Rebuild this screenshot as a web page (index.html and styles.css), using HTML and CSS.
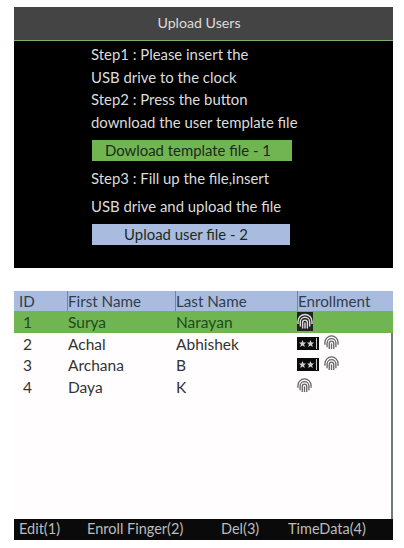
FILE: index.html
```html
<!DOCTYPE html>
<html lang="en">
<head>
  <meta charset="UTF-8">
  <meta name="viewport" content="width=device-width, initial-scale=1.0">
  <title>Upload Users</title>
  <link rel="stylesheet" href="styles.css">
</head>
<body>
  <svg class="defs" width="0" height="0">
    <symbol id="finger" viewBox="0 0 16 16">
      <g fill="none" stroke="currentColor" stroke-width="1.400">
        <path d="M1 10.500V8a7 7 0 0 1 14 0v2.500"/>
        <path d="M3.300 13V8.500a4.700 4.700 0 0 1 9.400 0V13"/>
        <path d="M5.600 15V9a2.400 2.400 0 0 1 4.800 0v6"/>
        <path d="M8 15V9"/>
      </g>
    </symbol>
    <symbol id="pass" viewBox="0 0 22 13">
      <rect width="22" height="13" fill="#0a0a0a"/>
      <path fill="#d0d0d0" d="M5.500 3l1 2.500 2.600.1-2 1.700.7 2.600-2.300-1.500-2.300 1.500.7-2.600-2-1.700 2.600-.1zM13.500 3l1 2.500 2.600.1-2 1.700.7 2.600-2.300-1.500-2.300 1.500.7-2.600-2-1.700 2.600-.1z"/>
      <rect x="19" y="1" width="1" height="11" fill="#d0d0d0"/>
    </symbol>
  </svg>

  <!-- upload screen -->
  <div class="panel upload">
    <div class="title">Upload Users</div>
    <div class="steps">
      <p class="line">Step1 : Please insert the</p>
      <p class="line">USB drive to the clock</p>
      <p class="line">Step2 : Press the button</p>
      <p class="line">download the user template file</p>
      <div class="btn btn-green">Dowload template file - 1</div>
      <p class="line line-wide">Step3 : Fill up the file,insert</p>
      <p class="line line-wide">USB drive and upload the file</p>
      <div class="btn btn-blue">Upload user file - 2</div>
    </div>
  </div>

  <!-- user list -->
  <div class="panel users">
    <div class="row head">
      <span>ID</span>
      <span>First Name</span>
      <span>Last Name</span>
      <span>Enrollment</span>
    </div>
    <div class="list">
      <div class="row selected">
        <span class="num">1</span><span>Surya</span><span>Narayan</span>
        <span class="enroll"><svg class="fp fp-dark"><use href="#finger"/></svg></span>
      </div>
      <div class="row">
        <span class="num">2</span><span>Achal</span><span>Abhishek</span>
        <span class="enroll"><svg class="pw"><use href="#pass"/></svg><svg class="fp"><use href="#finger"/></svg></span>
      </div>
      <div class="row">
        <span class="num">3</span><span>Archana</span><span>B</span>
        <span class="enroll"><svg class="pw"><use href="#pass"/></svg><svg class="fp"><use href="#finger"/></svg></span>
      </div>
      <div class="row">
        <span class="num">4</span><span>Daya</span><span>K</span>
        <span class="enroll"><svg class="fp"><use href="#finger"/></svg></span>
      </div>
    </div>
    <div class="footer">
      <span>Edit(1)</span>
      <span>Enroll Finger(2)</span>
      <span>Del(3)</span>
      <span>TimeData(4)</span>
    </div>
  </div>
</body>
</html>
```
FILE: styles.css
```css
body {
  margin: 0;
  padding: 7px 11px 8px 14px;
  background-color: #fff;
  font-family: Lato, sans-serif;
  font-size: 15.500px;
}
.defs {
  display: block;
  height: 0;
}
.panel {
  width: 379px;
}

/* upload screen */
.upload {
  height: 261px;
  background-color: #000;
  color: #dcdcdc;
  font-size: 14.900px;
}
.title {
  height: 33px;
  line-height: 32px;
  padding-right: 9px;
  text-align: center;
  background-color: #444;
  border-bottom: 1px solid #7fb070;
  font-size: 14.200px;
}
.steps {
  padding: 2px 0 0 77px;
}
.line {
  margin: 0;
  height: 22.700px;
  line-height: 22.700px;
  white-space: nowrap;
}
.line-wide {
  height: 28px;
  line-height: 28px;
}
.btn {
  height: 21px;
  line-height: 20px;
  text-align: center;
  color: #1c2a1c;
  box-sizing: border-box;
}
.btn-green {
  width: 200px;
  margin: 6px 0 3px 1px;
  padding-right: 8px;
  background-color: #71b553;
}
.btn-blue {
  width: 198px;
  margin: 4px 0 0 1px;
  padding-right: 10px;
  background-color: #a9bcdf;
}

/* user list */
.users {
  margin-top: 23px;
  height: 249px;
  display: flex;
  flex-direction: column;
  color: #333;
}
.row {
  display: grid;
  grid-template-columns: 53px 108px 122px 1fr;
  height: 21.500px;
  line-height: 23px;
  white-space: nowrap;
}
.row span {
  padding-left: 1px;
}
.head {
  height: 20px;
  line-height: 20px;
  background-color: #a9bcdf;
  color: #333c4c;
  font-size: 15.200px;
}
.head span {
  padding-left: 0;
  border-left: 1px solid #75859f;
}
.head span:first-child {
  padding-left: 5px;
  border-left: none;
}
.list {
  flex: 1;
  border-right: 2px solid #70787c;
  background-color: #fffdfe;
}
.selected {
  margin-right: -2px;
  background-color: #71b553;
  color: #1f4a1c;
}
.row .num {
  padding-left: 9px;
}
.row .enroll {
  display: flex;
  align-items: flex-start;
  gap: 5px;
  padding: 2px 0 0 0;
}
.fp {
  width: 15px;
  height: 15px;
  color: #666;
}
.selected .enroll {
  padding-top: 1px;
}
.fp-dark {
  width: 16px;
  height: 19px;
  background-color: #222;
  color: #ddd;
}
.pw {
  width: 22px;
  height: 13px;
  margin-top: 2px;
}
.footer {
  height: 21px;
  line-height: 20px;
  display: flex;
  background-color: #0a0a0a;
  color: #bcbcbc;
  white-space: nowrap;
  font-size: 14.500px;
}
.footer span:nth-child(1) {
  margin-left: 5px;
  width: 68px;
}
.footer span:nth-child(2) {
  width: 134px;
}
.footer span:nth-child(3) {
  width: 67px;
}
```
